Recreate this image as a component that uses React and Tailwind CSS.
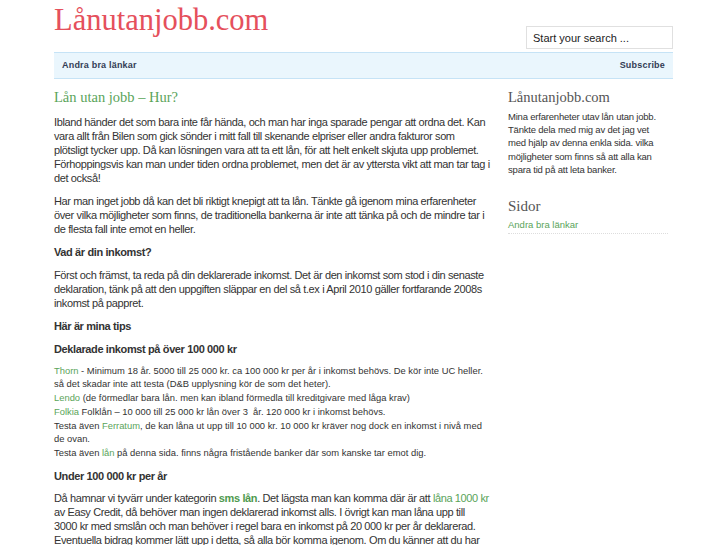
import React from 'react';

const serif = { fontFamily: '"Liberation Serif", "Times New Roman", serif' };

const A = ({ children, bold }) => (
  <a href="#" className={bold ? 'text-[#4e9a4e] font-bold' : 'text-[#5aa45a]'}>
    {children}
  </a>
);

const App = () => {
  return (
    <div className="min-h-screen bg-white text-[#333]" style={{ fontFamily: '"Liberation Sans", Arial, sans-serif' }}>
      <div className="w-[619px] ml-[54px]">
        <div className="flex justify-between items-start h-[52px]">
          <h1 className="text-[30.5px] leading-none text-[#e5505c] mt-[5px]" style={serif}>Lånutanjobb.com</h1>
          <input
            className="mt-[26px] w-[147px] h-[23px] border border-[#e0e0e0] px-[6px] text-[11px] text-[#222] placeholder-[#222] outline-none"
            placeholder="Start your search ..."
          />
        </div>
        <div className="flex justify-between items-center h-[27px] bg-[#eaf6fd] border-y border-[#c6e3f6] px-[8px] text-[9px] font-bold text-[#333c55] tracking-[0.2px]">
          <a href="#">Andra bra länkar</a>
          <a href="#">Subscribe</a>
        </div>
        <div className="flex">
          <div className="w-[436px] text-[11px] leading-[14px] tracking-[-0.38px]">
            <h2 className="text-[14.5px] leading-none text-[#5aa45a] mt-[11px] mb-[10px] tracking-normal" style={serif}>Lån utan jobb – Hur?</h2>
            <p className="mb-[9px]">Ibland händer det som bara inte får hända, och man har inga sparade pengar att ordna det. Kan vara allt från Bilen som gick sönder i mitt fall till skenande elpriser eller andra fakturor som plötsligt tycker upp. Då kan lösningen vara att ta ett lån, för att helt enkelt skjuta upp problemet. Förhoppingsvis kan man under tiden ordna problemet, men det är av yttersta vikt att man tar tag i det också!</p>
            <p className="mb-[9px]">Har man inget jobb då kan det bli riktigt knepigt att ta lån. Tänkte gå igenom mina erfarenheter över vilka möjligheter som finns, de traditionella bankerna är inte att tänka på och de mindre tar i de flesta fall inte emot en heller.</p>
            <p className="mb-[9px] font-bold">Vad är din inkomst?</p>
            <p className="mb-[9px]">Först och främst, ta reda på din deklarerade inkomst. Det är den inkomst som stod i din senaste deklaration, tänk på att den uppgiften släppar en del så t.ex i April 2010 gäller fortfarande 2008s inkomst på pappret.</p>
            <p className="mb-[9px] font-bold">Här är mina tips</p>
            <p className="mb-[8px] font-bold">Deklarade inkomst på över 100 000 kr</p>
            <p className="mb-[9px] text-[9.4px] leading-[13.8px] tracking-[0px]">
              <A>Thorn</A> - Minimum 18 år. 5000 till 25 000 kr. ca 100 000 kr per år i inkomst behövs. De kör inte UC heller. så det skadar inte att testa (D&amp;B upplysning kör de som det heter).<br />
              <A>Lendo</A> (de förmedlar bara lån. men kan ibland förmedla till kreditgivare med låga krav)<br />
              <A>Folkia</A> Folklån – 10 000 till 25 000 kr lån över 3&nbsp; år. 120 000 kr i inkomst behövs.<br />
              Testa även <A>Ferratum</A>, de kan låna ut upp till 10 000 kr. 10 000 kr kräver nog dock en inkomst i nivå med de ovan.<br />
              Testa även <A>lån</A> på denna sida. finns några fristående banker där som kanske tar emot dig.
            </p>
            <p className="mb-[8px] font-bold">Under 100 000 kr per år</p>
            <p>Då hamnar vi tyvärr under kategorin <A bold>sms lån</A>. Det lägsta man kan komma där är att <A>låna 1000 kr</A> av Easy Credit, då behöver man ingen deklarerad inkomst alls. I övrigt kan man låna upp till 3000 kr med smslån och man behöver i regel bara en inkomst på 20 000 kr per år deklarerad. Eventuella bidrag kommer lätt upp i detta, så alla bör komma igenom. Om du känner att du har ordnad</p>
          </div>
          <div className="w-[160px] ml-[18px]">
            <h3 className="text-[14.5px] leading-none text-[#555] mt-[11px] mb-[5px]" style={serif}>Lånutanjobb.com</h3>
            <p className="text-[9.5px] leading-[13.4px] tracking-[-0.2px]">Mina erfarenheter utav lån utan jobb. Tänkte dela med mig av det jag vet med hjälp av denna enkla sida. vilka möjligheter som finns så att alla kan spara tid på att leta banker.</p>
            <h3 className="text-[15px] leading-none text-[#555] mt-[22px] mb-[4px]" style={serif}>Sidor</h3>
            <div className="border-b border-dotted border-[#ddd] pb-[2px] text-[9.5px] leading-[13px]">
              <A>Andra bra länkar</A>
            </div>
          </div>
        </div>
      </div>
    </div>
  );
};

export default App;
